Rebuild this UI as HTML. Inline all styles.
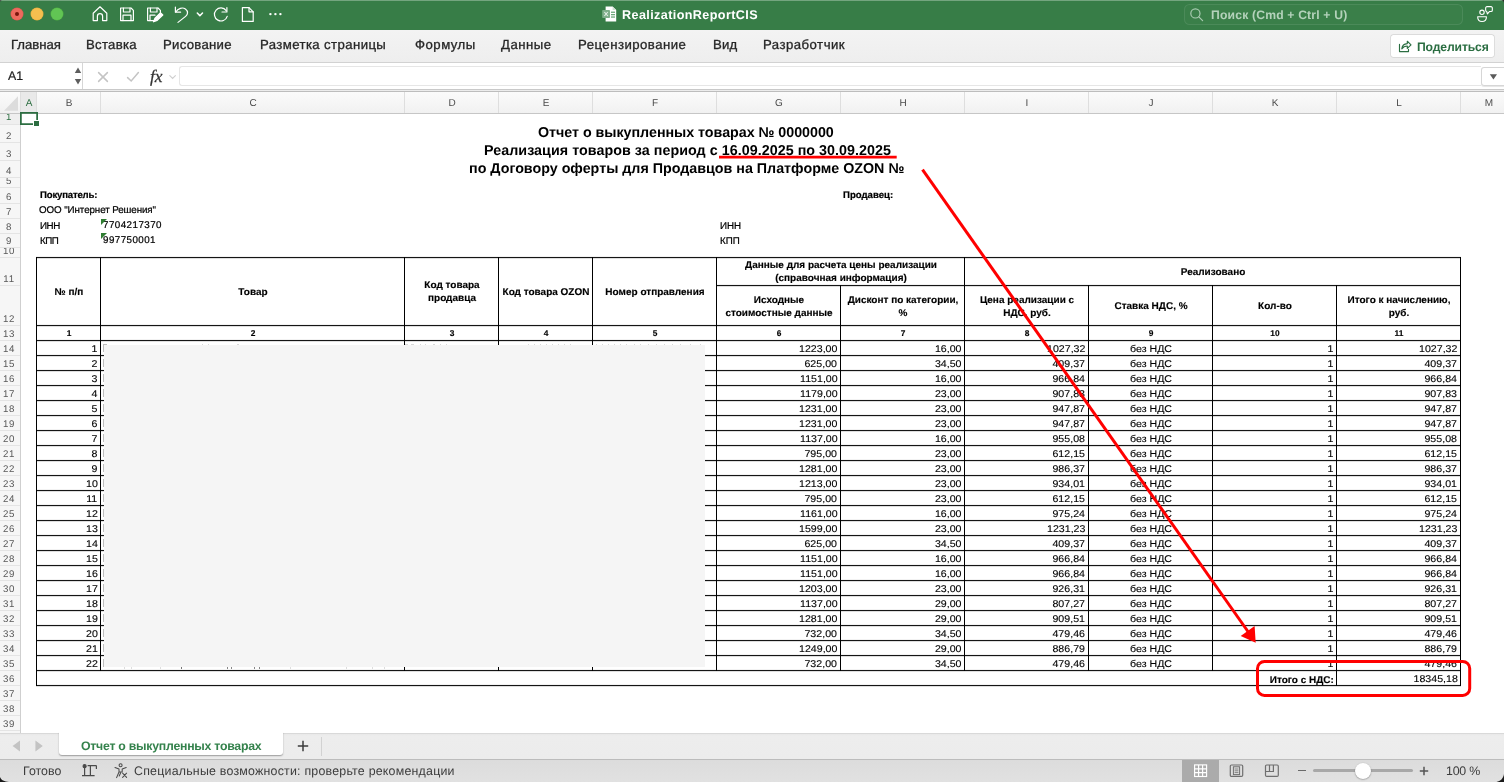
<!DOCTYPE html>
<html><head><meta charset="utf-8"><title>RealizationReportCIS</title>
<style>
html,body{margin:0;padding:0}
body{width:1504px;height:782px;position:relative;overflow:hidden;background:#fff;font-family:"Liberation Sans",sans-serif;}
.t{position:absolute;white-space:nowrap;transform:skewX(.03deg)}
.m{-webkit-text-stroke:0.3px currentColor}
.a{position:absolute;}
.hl{position:absolute;height:1px;background:#151515;box-shadow:0 1px 0 rgba(0,0,0,.13),0 -1px 0 rgba(0,0,0,.05)}
.vl{position:absolute;width:1px;background:#000;}
svg{position:absolute;overflow:visible}
</style></head><body><div id="w" style="position:absolute;left:0;top:0;width:1504px;height:782px;will-change:transform">

<div class="a" style="left:0;top:0;width:1504px;height:30px;background:#377d47"></div>
<div class="a" style="left:0;top:0;width:1504px;height:1px;background:#74a57f"></div>
<div class="a" style="left:11.0px;top:8px;width:12px;height:12px;border-radius:50%;background:#ed6a5e;box-shadow:0 0 0 0.5px #d8574b"></div>
<div class="a" style="left:31.0px;top:8px;width:12px;height:12px;border-radius:50%;background:#f5bf4f;box-shadow:0 0 0 0.5px #dea83b"></div>
<div class="a" style="left:51.0px;top:8px;width:12px;height:12px;border-radius:50%;background:#61c554;box-shadow:0 0 0 0.5px #4fae42"></div>
<div class="a" style="left:15px;top:12px;width:4px;height:4px;border-radius:50%;background:#7a150d"></div>
<svg style="left:0;top:0" width="300" height="30" viewBox="0 0 300 30" fill="none" stroke="#fff" stroke-width="1.2" stroke-linejoin="round" stroke-linecap="round">
<path d="M93.2 13.2 L100 6.8 L106.8 13.2 V20.6 H102.6 V16.2 a2.6 2.6 0 0 0 -5.2 0 V20.6 H93.2 Z"/>
<path d="M120.6 8 H131 L133.4 10.4 V20.6 H120.6 Z"/><path d="M123.4 8 V12 H130 V8"/><path d="M123 20.6 V15.2 H131 V20.6"/>
<path d="M158 8 L160.4 10.4 V12.5 M155 20.6 H147.6 V8 H158"/><path d="M150.4 8 V12 H157 V8"/><path d="M150 20.6 V15.2 H155"/>
<path d="M153.5 21.8 L155 18.2 L160.6 12.8 L162.8 15 L157.2 20.4 Z" fill="#fff"/>
<path d="M175.4 7 V12.2 H180.6"/><path d="M175.8 12 C178 8.2 182.6 7 185.4 9 C188.6 11.4 187.8 14.6 185.6 16.4 L178 22.4"/>
<path d="M197.3 13 L199.9 15.8 L202.5 13" stroke-width="1.5"/>
<path d="M226.2 10.6 A6.5 6.5 0 1 0 227.2 16.3"/><path d="M222 12 H226.9 V7.6"/>
<path d="M242.4 7.6 H249 L253.2 11.8 V21.4 H242.4 Z"/><path d="M249 7.6 V11.8 H253.2"/>
<circle cx="270.4" cy="14.1" r="1.2" fill="#fff" stroke="none"/><circle cx="275.4" cy="14.1" r="1.2" fill="#fff" stroke="none"/><circle cx="280.4" cy="14.1" r="1.2" fill="#fff" stroke="none"/>
</svg>
<svg style="left:602px;top:6px" width="15" height="16" viewBox="0 0 15 16"><path d="M3.6 0.4 H10.6 L14.2 4 V15.4 H3.6 Z" fill="#fff"/><path d="M10.6 0.4 V4 H14.2 Z" fill="#cfe0d3"/>
<rect x="9" y="5.6" width="4" height="1.3" fill="#6fa87c"/><rect x="9" y="8" width="4" height="1.3" fill="#6fa87c"/><rect x="9" y="10.4" width="4" height="1.3" fill="#6fa87c"/>
<rect x="0.2" y="4" width="7.8" height="8" rx="0.8" fill="#7fae8a"/><path d="M2.4 6 L5.8 10 M5.8 6 L2.4 10" stroke="#e6f0e8" stroke-width="1.1"/></svg>
<div class="t" style="left:621.90px;top:7.00px;font-size:12.60px;line-height:16px;font-weight:700;letter-spacing:0.394px;color:#fff;">RealizationReportCIS</div>
<div class="a" style="left:1183.5px;top:3.5px;width:279px;height:21px;border-radius:5.5px;background:rgba(255,255,255,0.015);box-shadow:0 0 0 1px rgba(255,255,255,0.09) inset"></div>
<svg style="left:1189px;top:7px" width="16" height="16" viewBox="0 0 16 16" fill="none" stroke="#a9cbb1" stroke-width="1.2" stroke-linecap="round"><circle cx="6.4" cy="6.4" r="4.6"/><path d="M9.8 9.8 L13.6 13.6"/></svg>
<div class="t" style="left:1210.70px;top:7.00px;font-size:12.20px;line-height:16px;font-weight:700;letter-spacing:0.165px;color:#b4d2bb;">Поиск (Cmd + Ctrl + U)</div>
<svg style="left:1476px;top:5px" width="18" height="18" viewBox="0 0 18 18" fill="none" stroke="#fff" stroke-width="1.1" stroke-linejoin="round"><circle cx="6" cy="7.3" r="2.2"/><path d="M1.65 11.75 H10.45 C10.45 14.8 8.4 16.55 6.05 16.55 C3.7 16.55 1.65 14.8 1.65 11.75 Z"/><path d="M11 1.65 H15 A1.35 1.35 0 0 1 16.35 3 V5.2 A1.35 1.35 0 0 1 15 6.55 H13.4 L11.4 8.8 L10.7 6.5 A1.35 1.35 0 0 1 9.65 5.2 V3 A1.35 1.35 0 0 1 11 1.65 Z"/></svg>
<div class="a" style="left:0;top:30px;width:1504px;height:32px;background:linear-gradient(#f3f3f3,#eeeeee)"></div>
<div class="a" style="left:0;top:62px;width:1504px;height:1px;background:#d2d2d2"></div>
<div class="t" style="left:10.60px;top:37.00px;font-size:13.20px;line-height:16px;letter-spacing:-0.049px;color:#262626;-webkit-text-stroke:0.3px #262626;">Главная</div>
<div class="t" style="left:86.40px;top:37.00px;font-size:13.20px;line-height:16px;letter-spacing:0.263px;color:#262626;-webkit-text-stroke:0.3px #262626;">Вставка</div>
<div class="t" style="left:162.90px;top:37.00px;font-size:13.20px;line-height:16px;letter-spacing:0.258px;color:#262626;-webkit-text-stroke:0.3px #262626;">Рисование</div>
<div class="t" style="left:260.00px;top:37.00px;font-size:13.20px;line-height:16px;letter-spacing:0.385px;color:#262626;-webkit-text-stroke:0.3px #262626;">Разметка страницы</div>
<div class="t" style="left:414.60px;top:37.00px;font-size:13.20px;line-height:16px;letter-spacing:0.480px;color:#262626;-webkit-text-stroke:0.3px #262626;">Формулы</div>
<div class="t" style="left:500.60px;top:37.00px;font-size:13.20px;line-height:16px;letter-spacing:0.468px;color:#262626;-webkit-text-stroke:0.3px #262626;">Данные</div>
<div class="t" style="left:578.40px;top:37.00px;font-size:13.20px;line-height:16px;letter-spacing:0.462px;color:#262626;-webkit-text-stroke:0.3px #262626;">Рецензирование</div>
<div class="t" style="left:713.40px;top:37.00px;font-size:13.20px;line-height:16px;letter-spacing:0.107px;color:#262626;-webkit-text-stroke:0.3px #262626;">Вид</div>
<div class="t" style="left:762.60px;top:37.00px;font-size:13.20px;line-height:16px;letter-spacing:0.466px;color:#262626;-webkit-text-stroke:0.3px #262626;">Разработчик</div>
<div class="a" style="left:1390.5px;top:35px;width:103px;height:22px;border-radius:2.5px;background:#fff;box-shadow:0 0 0 0.7px #d4d4d4"></div>
<svg style="left:1398px;top:39px" width="14" height="14" viewBox="0 0 14 14" fill="none" stroke="#2b6e42" stroke-width="1.15" stroke-linejoin="round" stroke-linecap="round"><path d="M1.5 5.4 V12.6 H10.5 V10.3"/><path d="M3.8 9.8 C4.2 6.6 6.4 4.8 9.3 4.6 V2.2 L13 5.8 L9.3 9.4 V7 C7 7 5.2 7.8 3.8 9.8 Z"/></svg>
<div class="t" style="left:1416.70px;top:38.50px;font-size:12.20px;line-height:16px;font-weight:700;letter-spacing:-0.152px;color:#2b6e42;">Поделиться</div>
<div class="a" style="left:0;top:63px;width:1504px;height:26px;background:#fff"></div>
<div class="a" style="left:0;top:89px;width:1504px;height:1px;background:#c9c9c9"></div>
<div class="a" style="left:0;top:90px;width:1504px;height:1px;background:#ececec"></div>
<div class="a" style="left:0;top:91px;width:1504px;height:1px;background:#bdbdbd"></div>
<div class="a" style="left:82px;top:63px;width:1px;height:26px;background:#d6d6d6"></div>
<div class="a" style="left:83px;top:63px;width:96px;height:26px;background:#fff"></div>
<div class="a" style="left:179px;top:66px;width:1302px;height:20px;background:#fff;border:0.6px solid #e6e6e6;border-right:none;border-radius:3px 0 0 3px;box-sizing:border-box"></div>
<div class="a" style="left:1481px;top:67px;width:26px;height:19px;background:#fff;border:1px solid #d6d6d6;border-radius:3px 0 0 3px;box-shadow:0 0.5px 0.8px rgba(0,0,0,.1);box-sizing:border-box"></div>
<svg style="left:1489px;top:73px" width="9" height="8" viewBox="0 0 9 8"><path d="M0.8 1.2 H8 L4.4 6.6 Z" fill="#5a5a5a"/></svg>
<div class="t" style="left:8.20px;top:67.80px;font-size:12.40px;line-height:16px;color:#1c1c1c;-webkit-text-stroke:0.2px #1c1c1c;">A1</div>
<svg style="left:74px;top:66px" width="8" height="20" viewBox="0 0 8 20"><path d="M0.8 7 H7.2 L4 1.6 Z M0.8 13 H7.2 L4 18.5 Z" fill="#5e5e5e"/></svg>
<svg style="left:96px;top:70px" width="80" height="14" viewBox="0 0 80 14" fill="none" stroke="#c4c4c4" stroke-width="1.5" stroke-linecap="round"><path d="M2.6 2.6 L11.4 11.4 M11.4 2.6 L2.6 11.4"/><path d="M31.6 7.6 L35.2 11 L42.4 2.6"/><path d="M73.8 5.6 L76.6 8.4 L79.4 5.6" stroke-width="1.1" stroke="#cfcfcf"/></svg>
<div class="t" style="left:150px;top:66px;font-family:'Liberation Serif',serif;font-style:italic;font-size:17.5px;line-height:20px;color:#333;letter-spacing:-0.2px;-webkit-text-stroke:0.25px #333">fx</div>
<div class="a" style="left:0;top:92px;width:1504px;height:21px;background:linear-gradient(#fbfbfb,#f1f1f1)"></div>
<div class="a" style="left:0;top:113px;width:1504px;height:1px;background:#c6c6c6"></div>
<div class="a" style="left:21px;top:92px;width:15px;height:21px;background:#e9e9e9"></div>
<div class="a" style="left:20px;top:92px;width:1px;height:21px;background:#dedede"></div>
<div class="t" style="left:28.80px;transform:translateX(-50%) skewX(.03deg);top:96.30px;font-size:10.00px;line-height:14px;color:#2c6e41;">A</div>
<div class="a" style="left:36px;top:92px;width:1px;height:21px;background:#dedede"></div>
<div class="t" style="left:68.80px;transform:translateX(-50%) skewX(.03deg);top:96.30px;font-size:10.00px;line-height:14px;color:#4a4a4a;">B</div>
<div class="a" style="left:100px;top:92px;width:1px;height:21px;background:#dedede"></div>
<div class="t" style="left:252.80px;transform:translateX(-50%) skewX(.03deg);top:96.30px;font-size:10.00px;line-height:14px;color:#4a4a4a;">C</div>
<div class="a" style="left:404px;top:92px;width:1px;height:21px;background:#dedede"></div>
<div class="t" style="left:451.80px;transform:translateX(-50%) skewX(.03deg);top:96.30px;font-size:10.00px;line-height:14px;color:#4a4a4a;">D</div>
<div class="a" style="left:498px;top:92px;width:1px;height:21px;background:#dedede"></div>
<div class="t" style="left:545.80px;transform:translateX(-50%) skewX(.03deg);top:96.30px;font-size:10.00px;line-height:14px;color:#4a4a4a;">E</div>
<div class="a" style="left:592px;top:92px;width:1px;height:21px;background:#dedede"></div>
<div class="t" style="left:654.80px;transform:translateX(-50%) skewX(.03deg);top:96.30px;font-size:10.00px;line-height:14px;color:#4a4a4a;">F</div>
<div class="a" style="left:716px;top:92px;width:1px;height:21px;background:#dedede"></div>
<div class="t" style="left:778.80px;transform:translateX(-50%) skewX(.03deg);top:96.30px;font-size:10.00px;line-height:14px;color:#4a4a4a;">G</div>
<div class="a" style="left:840px;top:92px;width:1px;height:21px;background:#dedede"></div>
<div class="t" style="left:902.80px;transform:translateX(-50%) skewX(.03deg);top:96.30px;font-size:10.00px;line-height:14px;color:#4a4a4a;">H</div>
<div class="a" style="left:964px;top:92px;width:1px;height:21px;background:#dedede"></div>
<div class="t" style="left:1026.80px;transform:translateX(-50%) skewX(.03deg);top:96.30px;font-size:10.00px;line-height:14px;color:#4a4a4a;">I</div>
<div class="a" style="left:1088px;top:92px;width:1px;height:21px;background:#dedede"></div>
<div class="t" style="left:1150.80px;transform:translateX(-50%) skewX(.03deg);top:96.30px;font-size:10.00px;line-height:14px;color:#4a4a4a;">J</div>
<div class="a" style="left:1212px;top:92px;width:1px;height:21px;background:#dedede"></div>
<div class="t" style="left:1274.80px;transform:translateX(-50%) skewX(.03deg);top:96.30px;font-size:10.00px;line-height:14px;color:#4a4a4a;">K</div>
<div class="a" style="left:1336px;top:92px;width:1px;height:21px;background:#dedede"></div>
<div class="t" style="left:1398.80px;transform:translateX(-50%) skewX(.03deg);top:96.30px;font-size:10.00px;line-height:14px;color:#4a4a4a;">L</div>
<div class="a" style="left:1460px;top:92px;width:1px;height:21px;background:#dedede"></div>
<div class="t" style="left:1488.80px;transform:translateX(-50%) skewX(.03deg);top:96.30px;font-size:10.00px;line-height:14px;color:#4a4a4a;">M</div>
<svg style="left:4px;top:96px" width="14" height="15" viewBox="0 0 14 15"><path d="M14 0.2 V14.8 H0 Z" fill="#dcdcdc"/></svg>
<div class="a" style="left:0;top:114px;width:20px;height:619px;background:#f6f6f6"></div>
<div class="a" style="left:20px;top:114px;width:1px;height:619px;background:#cfcfcf"></div>
<div class="a" style="left:0;top:114px;width:20px;height:10px;background:#efefef"></div>
<div class="a" style="left:0;top:124px;width:20px;height:1px;background:#e4e4e4"></div>
<div class="a" style="left:0;top:114px;width:20px;height:10px;overflow:hidden"><div class="t" style="left:8.6px;transform:translateX(-50%) skewX(.03deg);bottom:1.0px;font-size:9.7px;line-height:12px;letter-spacing:0.7px;margin-left:0.35px;color:#2c6e41">1</div></div>
<div class="a" style="left:0;top:142px;width:20px;height:1px;background:#e4e4e4"></div>
<div class="a" style="left:0;top:125px;width:20px;height:17px;overflow:hidden"><div class="t" style="left:8.6px;transform:translateX(-50%) skewX(.03deg);bottom:-0.4px;font-size:9.7px;line-height:12px;letter-spacing:0.7px;margin-left:0.35px;color:#585858">2</div></div>
<div class="a" style="left:0;top:160px;width:20px;height:1px;background:#e4e4e4"></div>
<div class="a" style="left:0;top:143px;width:20px;height:17px;overflow:hidden"><div class="t" style="left:8.6px;transform:translateX(-50%) skewX(.03deg);bottom:-0.4px;font-size:9.7px;line-height:12px;letter-spacing:0.7px;margin-left:0.35px;color:#585858">3</div></div>
<div class="a" style="left:0;top:177px;width:20px;height:1px;background:#e4e4e4"></div>
<div class="a" style="left:0;top:161px;width:20px;height:16px;overflow:hidden"><div class="t" style="left:8.6px;transform:translateX(-50%) skewX(.03deg);bottom:-0.4px;font-size:9.7px;line-height:12px;letter-spacing:0.7px;margin-left:0.35px;color:#585858">4</div></div>
<div class="a" style="left:0;top:187px;width:20px;height:1px;background:#e4e4e4"></div>
<div class="a" style="left:0;top:178px;width:20px;height:9px;overflow:hidden"><div class="t" style="left:8.6px;transform:translateX(-50%) skewX(.03deg);bottom:-0.4px;font-size:9.7px;line-height:12px;letter-spacing:0.7px;margin-left:0.35px;color:#585858">5</div></div>
<div class="a" style="left:0;top:203px;width:20px;height:1px;background:#e4e4e4"></div>
<div class="a" style="left:0;top:188px;width:20px;height:15px;overflow:hidden"><div class="t" style="left:8.6px;transform:translateX(-50%) skewX(.03deg);bottom:-0.4px;font-size:9.7px;line-height:12px;letter-spacing:0.7px;margin-left:0.35px;color:#585858">6</div></div>
<div class="a" style="left:0;top:218px;width:20px;height:1px;background:#e4e4e4"></div>
<div class="a" style="left:0;top:204px;width:20px;height:14px;overflow:hidden"><div class="t" style="left:8.6px;transform:translateX(-50%) skewX(.03deg);bottom:-0.4px;font-size:9.7px;line-height:12px;letter-spacing:0.7px;margin-left:0.35px;color:#585858">7</div></div>
<div class="a" style="left:0;top:233px;width:20px;height:1px;background:#e4e4e4"></div>
<div class="a" style="left:0;top:219px;width:20px;height:14px;overflow:hidden"><div class="t" style="left:8.6px;transform:translateX(-50%) skewX(.03deg);bottom:-0.4px;font-size:9.7px;line-height:12px;letter-spacing:0.7px;margin-left:0.35px;color:#585858">8</div></div>
<div class="a" style="left:0;top:247px;width:20px;height:1px;background:#e4e4e4"></div>
<div class="a" style="left:0;top:234px;width:20px;height:13px;overflow:hidden"><div class="t" style="left:8.6px;transform:translateX(-50%) skewX(.03deg);bottom:-0.4px;font-size:9.7px;line-height:12px;letter-spacing:0.7px;margin-left:0.35px;color:#585858">9</div></div>
<div class="a" style="left:0;top:257px;width:20px;height:1px;background:#e4e4e4"></div>
<div class="a" style="left:0;top:248px;width:20px;height:9px;overflow:hidden"><div class="t" style="left:8.6px;transform:translateX(-50%) skewX(.03deg);bottom:-0.4px;font-size:9.7px;line-height:12px;letter-spacing:0.7px;margin-left:0.35px;color:#585858">10</div></div>
<div class="a" style="left:0;top:285px;width:20px;height:1px;background:#e4e4e4"></div>
<div class="a" style="left:0;top:258px;width:20px;height:27px;overflow:hidden"><div class="t" style="left:8.6px;transform:translateX(-50%) skewX(.03deg);bottom:-0.4px;font-size:9.7px;line-height:12px;letter-spacing:0.7px;margin-left:0.35px;color:#585858">11</div></div>
<div class="a" style="left:0;top:325px;width:20px;height:1px;background:#e4e4e4"></div>
<div class="a" style="left:0;top:286px;width:20px;height:39px;overflow:hidden"><div class="t" style="left:8.6px;transform:translateX(-50%) skewX(.03deg);bottom:-0.4px;font-size:9.7px;line-height:12px;letter-spacing:0.7px;margin-left:0.35px;color:#585858">12</div></div>
<div class="a" style="left:0;top:340px;width:20px;height:1px;background:#e4e4e4"></div>
<div class="a" style="left:0;top:326px;width:20px;height:14px;overflow:hidden"><div class="t" style="left:8.6px;transform:translateX(-50%) skewX(.03deg);bottom:-0.4px;font-size:9.7px;line-height:12px;letter-spacing:0.7px;margin-left:0.35px;color:#585858">13</div></div>
<div class="a" style="left:0;top:355px;width:20px;height:1px;background:#e4e4e4"></div>
<div class="a" style="left:0;top:341px;width:20px;height:14px;overflow:hidden"><div class="t" style="left:8.6px;transform:translateX(-50%) skewX(.03deg);bottom:-0.4px;font-size:9.7px;line-height:12px;letter-spacing:0.7px;margin-left:0.35px;color:#585858">14</div></div>
<div class="a" style="left:0;top:370px;width:20px;height:1px;background:#e4e4e4"></div>
<div class="a" style="left:0;top:356px;width:20px;height:14px;overflow:hidden"><div class="t" style="left:8.6px;transform:translateX(-50%) skewX(.03deg);bottom:-0.4px;font-size:9.7px;line-height:12px;letter-spacing:0.7px;margin-left:0.35px;color:#585858">15</div></div>
<div class="a" style="left:0;top:385px;width:20px;height:1px;background:#e4e4e4"></div>
<div class="a" style="left:0;top:371px;width:20px;height:14px;overflow:hidden"><div class="t" style="left:8.6px;transform:translateX(-50%) skewX(.03deg);bottom:-0.4px;font-size:9.7px;line-height:12px;letter-spacing:0.7px;margin-left:0.35px;color:#585858">16</div></div>
<div class="a" style="left:0;top:400px;width:20px;height:1px;background:#e4e4e4"></div>
<div class="a" style="left:0;top:386px;width:20px;height:14px;overflow:hidden"><div class="t" style="left:8.6px;transform:translateX(-50%) skewX(.03deg);bottom:-0.4px;font-size:9.7px;line-height:12px;letter-spacing:0.7px;margin-left:0.35px;color:#585858">17</div></div>
<div class="a" style="left:0;top:415px;width:20px;height:1px;background:#e4e4e4"></div>
<div class="a" style="left:0;top:401px;width:20px;height:14px;overflow:hidden"><div class="t" style="left:8.6px;transform:translateX(-50%) skewX(.03deg);bottom:-0.4px;font-size:9.7px;line-height:12px;letter-spacing:0.7px;margin-left:0.35px;color:#585858">18</div></div>
<div class="a" style="left:0;top:430px;width:20px;height:1px;background:#e4e4e4"></div>
<div class="a" style="left:0;top:416px;width:20px;height:14px;overflow:hidden"><div class="t" style="left:8.6px;transform:translateX(-50%) skewX(.03deg);bottom:-0.4px;font-size:9.7px;line-height:12px;letter-spacing:0.7px;margin-left:0.35px;color:#585858">19</div></div>
<div class="a" style="left:0;top:445px;width:20px;height:1px;background:#e4e4e4"></div>
<div class="a" style="left:0;top:431px;width:20px;height:14px;overflow:hidden"><div class="t" style="left:8.6px;transform:translateX(-50%) skewX(.03deg);bottom:-0.4px;font-size:9.7px;line-height:12px;letter-spacing:0.7px;margin-left:0.35px;color:#585858">20</div></div>
<div class="a" style="left:0;top:460px;width:20px;height:1px;background:#e4e4e4"></div>
<div class="a" style="left:0;top:446px;width:20px;height:14px;overflow:hidden"><div class="t" style="left:8.6px;transform:translateX(-50%) skewX(.03deg);bottom:-0.4px;font-size:9.7px;line-height:12px;letter-spacing:0.7px;margin-left:0.35px;color:#585858">21</div></div>
<div class="a" style="left:0;top:475px;width:20px;height:1px;background:#e4e4e4"></div>
<div class="a" style="left:0;top:461px;width:20px;height:14px;overflow:hidden"><div class="t" style="left:8.6px;transform:translateX(-50%) skewX(.03deg);bottom:-0.4px;font-size:9.7px;line-height:12px;letter-spacing:0.7px;margin-left:0.35px;color:#585858">22</div></div>
<div class="a" style="left:0;top:490px;width:20px;height:1px;background:#e4e4e4"></div>
<div class="a" style="left:0;top:476px;width:20px;height:14px;overflow:hidden"><div class="t" style="left:8.6px;transform:translateX(-50%) skewX(.03deg);bottom:-0.4px;font-size:9.7px;line-height:12px;letter-spacing:0.7px;margin-left:0.35px;color:#585858">23</div></div>
<div class="a" style="left:0;top:505px;width:20px;height:1px;background:#e4e4e4"></div>
<div class="a" style="left:0;top:491px;width:20px;height:14px;overflow:hidden"><div class="t" style="left:8.6px;transform:translateX(-50%) skewX(.03deg);bottom:-0.4px;font-size:9.7px;line-height:12px;letter-spacing:0.7px;margin-left:0.35px;color:#585858">24</div></div>
<div class="a" style="left:0;top:520px;width:20px;height:1px;background:#e4e4e4"></div>
<div class="a" style="left:0;top:506px;width:20px;height:14px;overflow:hidden"><div class="t" style="left:8.6px;transform:translateX(-50%) skewX(.03deg);bottom:-0.4px;font-size:9.7px;line-height:12px;letter-spacing:0.7px;margin-left:0.35px;color:#585858">25</div></div>
<div class="a" style="left:0;top:535px;width:20px;height:1px;background:#e4e4e4"></div>
<div class="a" style="left:0;top:521px;width:20px;height:14px;overflow:hidden"><div class="t" style="left:8.6px;transform:translateX(-50%) skewX(.03deg);bottom:-0.4px;font-size:9.7px;line-height:12px;letter-spacing:0.7px;margin-left:0.35px;color:#585858">26</div></div>
<div class="a" style="left:0;top:550px;width:20px;height:1px;background:#e4e4e4"></div>
<div class="a" style="left:0;top:536px;width:20px;height:14px;overflow:hidden"><div class="t" style="left:8.6px;transform:translateX(-50%) skewX(.03deg);bottom:-0.4px;font-size:9.7px;line-height:12px;letter-spacing:0.7px;margin-left:0.35px;color:#585858">27</div></div>
<div class="a" style="left:0;top:565px;width:20px;height:1px;background:#e4e4e4"></div>
<div class="a" style="left:0;top:551px;width:20px;height:14px;overflow:hidden"><div class="t" style="left:8.6px;transform:translateX(-50%) skewX(.03deg);bottom:-0.4px;font-size:9.7px;line-height:12px;letter-spacing:0.7px;margin-left:0.35px;color:#585858">28</div></div>
<div class="a" style="left:0;top:580px;width:20px;height:1px;background:#e4e4e4"></div>
<div class="a" style="left:0;top:566px;width:20px;height:14px;overflow:hidden"><div class="t" style="left:8.6px;transform:translateX(-50%) skewX(.03deg);bottom:-0.4px;font-size:9.7px;line-height:12px;letter-spacing:0.7px;margin-left:0.35px;color:#585858">29</div></div>
<div class="a" style="left:0;top:595px;width:20px;height:1px;background:#e4e4e4"></div>
<div class="a" style="left:0;top:581px;width:20px;height:14px;overflow:hidden"><div class="t" style="left:8.6px;transform:translateX(-50%) skewX(.03deg);bottom:-0.4px;font-size:9.7px;line-height:12px;letter-spacing:0.7px;margin-left:0.35px;color:#585858">30</div></div>
<div class="a" style="left:0;top:610px;width:20px;height:1px;background:#e4e4e4"></div>
<div class="a" style="left:0;top:596px;width:20px;height:14px;overflow:hidden"><div class="t" style="left:8.6px;transform:translateX(-50%) skewX(.03deg);bottom:-0.4px;font-size:9.7px;line-height:12px;letter-spacing:0.7px;margin-left:0.35px;color:#585858">31</div></div>
<div class="a" style="left:0;top:625px;width:20px;height:1px;background:#e4e4e4"></div>
<div class="a" style="left:0;top:611px;width:20px;height:14px;overflow:hidden"><div class="t" style="left:8.6px;transform:translateX(-50%) skewX(.03deg);bottom:-0.4px;font-size:9.7px;line-height:12px;letter-spacing:0.7px;margin-left:0.35px;color:#585858">32</div></div>
<div class="a" style="left:0;top:640px;width:20px;height:1px;background:#e4e4e4"></div>
<div class="a" style="left:0;top:626px;width:20px;height:14px;overflow:hidden"><div class="t" style="left:8.6px;transform:translateX(-50%) skewX(.03deg);bottom:-0.4px;font-size:9.7px;line-height:12px;letter-spacing:0.7px;margin-left:0.35px;color:#585858">33</div></div>
<div class="a" style="left:0;top:655px;width:20px;height:1px;background:#e4e4e4"></div>
<div class="a" style="left:0;top:641px;width:20px;height:14px;overflow:hidden"><div class="t" style="left:8.6px;transform:translateX(-50%) skewX(.03deg);bottom:-0.4px;font-size:9.7px;line-height:12px;letter-spacing:0.7px;margin-left:0.35px;color:#585858">34</div></div>
<div class="a" style="left:0;top:670px;width:20px;height:1px;background:#e4e4e4"></div>
<div class="a" style="left:0;top:656px;width:20px;height:14px;overflow:hidden"><div class="t" style="left:8.6px;transform:translateX(-50%) skewX(.03deg);bottom:-0.4px;font-size:9.7px;line-height:12px;letter-spacing:0.7px;margin-left:0.35px;color:#585858">35</div></div>
<div class="a" style="left:0;top:685px;width:20px;height:1px;background:#e4e4e4"></div>
<div class="a" style="left:0;top:671px;width:20px;height:14px;overflow:hidden"><div class="t" style="left:8.6px;transform:translateX(-50%) skewX(.03deg);bottom:-0.4px;font-size:9.7px;line-height:12px;letter-spacing:0.7px;margin-left:0.35px;color:#585858">36</div></div>
<div class="a" style="left:0;top:700px;width:20px;height:1px;background:#e4e4e4"></div>
<div class="a" style="left:0;top:686px;width:20px;height:14px;overflow:hidden"><div class="t" style="left:8.6px;transform:translateX(-50%) skewX(.03deg);bottom:-0.4px;font-size:9.7px;line-height:12px;letter-spacing:0.7px;margin-left:0.35px;color:#585858">37</div></div>
<div class="a" style="left:0;top:715px;width:20px;height:1px;background:#e4e4e4"></div>
<div class="a" style="left:0;top:701px;width:20px;height:14px;overflow:hidden"><div class="t" style="left:8.6px;transform:translateX(-50%) skewX(.03deg);bottom:-0.4px;font-size:9.7px;line-height:12px;letter-spacing:0.7px;margin-left:0.35px;color:#585858">38</div></div>
<div class="a" style="left:0;top:730px;width:20px;height:1px;background:#e4e4e4"></div>
<div class="a" style="left:0;top:716px;width:20px;height:14px;overflow:hidden"><div class="t" style="left:8.6px;transform:translateX(-50%) skewX(.03deg);bottom:-0.4px;font-size:9.7px;line-height:12px;letter-spacing:0.7px;margin-left:0.35px;color:#585858">39</div></div>
<div class="a" style="left:19.6px;top:112.2px;width:18.4px;height:12.8px;box-shadow:inset 0 0 0 1.75px #2c6e41"></div>
<div class="a" style="left:33.4px;top:120.4px;width:5px;height:5px;background:#2c6e41;border:1px solid #fff;border-right:none;border-bottom:none;box-sizing:content-box"></div>
<div class="t" style="left:538.20px;top:124.10px;font-size:14.30px;line-height:16px;font-weight:700;letter-spacing:-0.038px;color:#000;">Отчет о выкупленных товарах № 0000000</div>
<div class="t" style="left:483.60px;top:142.10px;font-size:14.30px;line-height:16px;font-weight:700;letter-spacing:0.038px;color:#000;">Реализация товаров за период с 16.09.2025 по 30.09.2025</div>
<div class="t" style="left:468.80px;top:160.10px;font-size:14.30px;line-height:16px;font-weight:700;letter-spacing:-0.009px;color:#000;">по Договору оферты для Продавцов на Платформе OZON №</div>
<div class="t" style="left:39.60px;top:189.00px;font-size:9.60px;line-height:12px;font-weight:700;letter-spacing:-0.189px;color:#000;-webkit-text-stroke:0.22px #000;">Покупатель:</div>
<div class="t" style="left:39.40px;top:203.50px;font-size:9.80px;line-height:12px;letter-spacing:-0.095px;color:#000;-webkit-text-stroke:0.22px #000;">ООО &quot;Интернет Решения&quot;</div>
<div class="t" style="left:39.60px;top:219.50px;font-size:9.80px;line-height:12px;letter-spacing:-0.466px;color:#000;-webkit-text-stroke:0.22px #000;">ИНН</div>
<div class="t" style="left:39.60px;top:234.50px;font-size:9.80px;line-height:12px;letter-spacing:-0.465px;color:#000;-webkit-text-stroke:0.22px #000;">КПП</div>
<div class="t" style="left:103.00px;top:218.50px;font-size:9.80px;line-height:12px;letter-spacing:0.450px;color:#000;-webkit-text-stroke:0.22px #000;">7704217370</div>
<div class="t" style="left:103.00px;top:233.50px;font-size:9.80px;line-height:12px;letter-spacing:0.439px;color:#000;-webkit-text-stroke:0.22px #000;">997750001</div>
<div class="t" style="left:843.00px;top:189.00px;font-size:9.60px;line-height:12px;font-weight:700;color:#000;-webkit-text-stroke:0.22px #000;">Продавец:</div>
<div class="t" style="left:719.50px;top:219.50px;font-size:9.80px;line-height:12px;color:#000;-webkit-text-stroke:0.22px #000;">ИНН</div>
<div class="t" style="left:719.50px;top:234.50px;font-size:9.80px;line-height:12px;color:#000;-webkit-text-stroke:0.22px #000;">КПП</div>
<svg style="left:101px;top:219px" width="6" height="6" viewBox="0 0 6 6"><path d="M0 0 H6 L0 6 Z" fill="#2f7d32"/></svg>
<svg style="left:101px;top:233px" width="6" height="6" viewBox="0 0 6 6"><path d="M0 0 H6 L0 6 Z" fill="#2f7d32"/></svg>
<div class="hl" style="left:36px;top:257px;width:1425px"></div>
<div class="hl" style="left:716px;top:285px;width:745px"></div>
<div class="hl" style="left:36px;top:325px;width:1425px"></div>
<div class="hl" style="left:36px;top:340px;width:1425px"></div>
<div class="hl" style="left:36px;top:355px;width:1425px"></div>
<div class="hl" style="left:36px;top:370px;width:1425px"></div>
<div class="hl" style="left:36px;top:385px;width:1425px"></div>
<div class="hl" style="left:36px;top:400px;width:1425px"></div>
<div class="hl" style="left:36px;top:415px;width:1425px"></div>
<div class="hl" style="left:36px;top:430px;width:1425px"></div>
<div class="hl" style="left:36px;top:445px;width:1425px"></div>
<div class="hl" style="left:36px;top:460px;width:1425px"></div>
<div class="hl" style="left:36px;top:475px;width:1425px"></div>
<div class="hl" style="left:36px;top:490px;width:1425px"></div>
<div class="hl" style="left:36px;top:505px;width:1425px"></div>
<div class="hl" style="left:36px;top:520px;width:1425px"></div>
<div class="hl" style="left:36px;top:535px;width:1425px"></div>
<div class="hl" style="left:36px;top:550px;width:1425px"></div>
<div class="hl" style="left:36px;top:565px;width:1425px"></div>
<div class="hl" style="left:36px;top:580px;width:1425px"></div>
<div class="hl" style="left:36px;top:595px;width:1425px"></div>
<div class="hl" style="left:36px;top:610px;width:1425px"></div>
<div class="hl" style="left:36px;top:625px;width:1425px"></div>
<div class="hl" style="left:36px;top:640px;width:1425px"></div>
<div class="hl" style="left:36px;top:655px;width:1425px"></div>
<div class="hl" style="left:36px;top:670px;width:1425px"></div>
<div class="hl" style="left:36px;top:685px;width:1425px"></div>
<div class="vl" style="left:36px;top:257px;height:429px"></div>
<div class="vl" style="left:100px;top:257px;height:414px"></div>
<div class="vl" style="left:404px;top:257px;height:414px"></div>
<div class="vl" style="left:498px;top:257px;height:414px"></div>
<div class="vl" style="left:592px;top:257px;height:414px"></div>
<div class="vl" style="left:716px;top:257px;height:414px"></div>
<div class="vl" style="left:840px;top:285px;height:386px"></div>
<div class="vl" style="left:964px;top:257px;height:414px"></div>
<div class="vl" style="left:1088px;top:285px;height:386px"></div>
<div class="vl" style="left:1212px;top:285px;height:386px"></div>
<div class="vl" style="left:1336px;top:285px;height:386px"></div>
<div class="vl" style="left:1460px;top:257px;height:429px"></div>
<div class="vl" style="left:1336px;top:670px;height:16px"></div>
<div class="t" style="left:68.50px;top:284.70px;transform:translateX(-50%) scaleX(1.020) skewX(.03deg);font-size:9.80px;line-height:13.00px;font-weight:700;letter-spacing:0.00px;-webkit-text-stroke:0.15px #000">№ п/п</div>
<div class="t" style="left:252.50px;top:284.70px;transform:translateX(-50%) scaleX(1.020) skewX(.03deg);font-size:9.80px;line-height:13.00px;font-weight:700;letter-spacing:0.00px;-webkit-text-stroke:0.15px #000">Товар</div>
<div class="t" style="left:451.50px;top:278.20px;transform:translateX(-50%) scaleX(1.020) skewX(.03deg);font-size:9.80px;line-height:13.00px;font-weight:700;letter-spacing:0.00px;-webkit-text-stroke:0.15px #000">Код товара</div>
<div class="t" style="left:451.50px;top:291.20px;transform:translateX(-50%) scaleX(1.020) skewX(.03deg);font-size:9.80px;line-height:13.00px;font-weight:700;letter-spacing:0.00px;-webkit-text-stroke:0.15px #000">продавца</div>
<div class="t" style="left:545.50px;top:284.70px;transform:translateX(-50%) scaleX(1.020) skewX(.03deg);font-size:9.80px;line-height:13.00px;font-weight:700;letter-spacing:0.00px;-webkit-text-stroke:0.15px #000">Код товара OZON</div>
<div class="t" style="left:654.50px;top:284.70px;transform:translateX(-50%) scaleX(1.020) skewX(.03deg);font-size:9.80px;line-height:13.00px;font-weight:700;letter-spacing:0.00px;-webkit-text-stroke:0.15px #000">Номер отправления</div>
<div class="t" style="left:840.50px;top:258.20px;transform:translateX(-50%) scaleX(1.020) skewX(.03deg);font-size:9.80px;line-height:13.00px;font-weight:700;letter-spacing:0.00px;-webkit-text-stroke:0.15px #000">Данные для расчета цены реализации</div>
<div class="t" style="left:840.50px;top:271.20px;transform:translateX(-50%) scaleX(1.020) skewX(.03deg);font-size:9.80px;line-height:13.00px;font-weight:700;letter-spacing:0.00px;-webkit-text-stroke:0.15px #000">(справочная информация)</div>
<div class="t" style="left:1212.50px;top:264.70px;transform:translateX(-50%) scaleX(1.020) skewX(.03deg);font-size:9.80px;line-height:13.00px;font-weight:700;letter-spacing:0.00px;-webkit-text-stroke:0.15px #000">Реализовано</div>
<div class="t" style="left:778.50px;top:293.30px;transform:translateX(-50%) scaleX(1.020) skewX(.03deg);font-size:9.80px;line-height:13.00px;font-weight:700;letter-spacing:0.00px;-webkit-text-stroke:0.15px #000">Исходные</div>
<div class="t" style="left:778.50px;top:306.30px;transform:translateX(-50%) scaleX(1.020) skewX(.03deg);font-size:9.80px;line-height:13.00px;font-weight:700;letter-spacing:0.00px;-webkit-text-stroke:0.15px #000">стоимостные данные</div>
<div class="t" style="left:902.50px;top:293.30px;transform:translateX(-50%) scaleX(1.020) skewX(.03deg);font-size:9.80px;line-height:13.00px;font-weight:700;letter-spacing:0.00px;-webkit-text-stroke:0.15px #000">Дисконт по категории,</div>
<div class="t" style="left:902.50px;top:306.30px;transform:translateX(-50%) scaleX(1.020) skewX(.03deg);font-size:9.80px;line-height:13.00px;font-weight:700;letter-spacing:0.00px;-webkit-text-stroke:0.15px #000">%</div>
<div class="t" style="left:1026.50px;top:293.30px;transform:translateX(-50%) scaleX(1.020) skewX(.03deg);font-size:9.80px;line-height:13.00px;font-weight:700;letter-spacing:0.00px;-webkit-text-stroke:0.15px #000">Цена реализации с</div>
<div class="t" style="left:1026.50px;top:306.30px;transform:translateX(-50%) scaleX(1.020) skewX(.03deg);font-size:9.80px;line-height:13.00px;font-weight:700;letter-spacing:0.00px;-webkit-text-stroke:0.15px #000">НДС, руб.</div>
<div class="t" style="left:1150.50px;top:299.10px;transform:translateX(-50%) scaleX(1.020) skewX(.03deg);font-size:9.80px;line-height:13.00px;font-weight:700;letter-spacing:0.00px;-webkit-text-stroke:0.15px #000">Ставка НДС, %</div>
<div class="t" style="left:1274.50px;top:299.10px;transform:translateX(-50%) scaleX(1.020) skewX(.03deg);font-size:9.80px;line-height:13.00px;font-weight:700;letter-spacing:0.00px;-webkit-text-stroke:0.15px #000">Кол-во</div>
<div class="t" style="left:1398.50px;top:293.30px;transform:translateX(-50%) scaleX(1.020) skewX(.03deg);font-size:9.80px;line-height:13.00px;font-weight:700;letter-spacing:0.00px;-webkit-text-stroke:0.15px #000">Итого к начислению,</div>
<div class="t" style="left:1398.50px;top:306.30px;transform:translateX(-50%) scaleX(1.020) skewX(.03deg);font-size:9.80px;line-height:13.00px;font-weight:700;letter-spacing:0.00px;-webkit-text-stroke:0.15px #000">руб.</div>
<div class="t" style="left:68.50px;top:328.20px;transform:translateX(-50%) scaleX(1.000) skewX(.03deg);font-size:8.40px;line-height:10.00px;font-weight:700;letter-spacing:0.00px;-webkit-text-stroke:0.15px #000">1</div>
<div class="t" style="left:252.50px;top:328.20px;transform:translateX(-50%) scaleX(1.000) skewX(.03deg);font-size:8.40px;line-height:10.00px;font-weight:700;letter-spacing:0.00px;-webkit-text-stroke:0.15px #000">2</div>
<div class="t" style="left:451.50px;top:328.20px;transform:translateX(-50%) scaleX(1.000) skewX(.03deg);font-size:8.40px;line-height:10.00px;font-weight:700;letter-spacing:0.00px;-webkit-text-stroke:0.15px #000">3</div>
<div class="t" style="left:545.50px;top:328.20px;transform:translateX(-50%) scaleX(1.000) skewX(.03deg);font-size:8.40px;line-height:10.00px;font-weight:700;letter-spacing:0.00px;-webkit-text-stroke:0.15px #000">4</div>
<div class="t" style="left:654.50px;top:328.20px;transform:translateX(-50%) scaleX(1.000) skewX(.03deg);font-size:8.40px;line-height:10.00px;font-weight:700;letter-spacing:0.00px;-webkit-text-stroke:0.15px #000">5</div>
<div class="t" style="left:778.50px;top:328.20px;transform:translateX(-50%) scaleX(1.000) skewX(.03deg);font-size:8.40px;line-height:10.00px;font-weight:700;letter-spacing:0.00px;-webkit-text-stroke:0.15px #000">6</div>
<div class="t" style="left:902.50px;top:328.20px;transform:translateX(-50%) scaleX(1.000) skewX(.03deg);font-size:8.40px;line-height:10.00px;font-weight:700;letter-spacing:0.00px;-webkit-text-stroke:0.15px #000">7</div>
<div class="t" style="left:1026.50px;top:328.20px;transform:translateX(-50%) scaleX(1.000) skewX(.03deg);font-size:8.40px;line-height:10.00px;font-weight:700;letter-spacing:0.00px;-webkit-text-stroke:0.15px #000">8</div>
<div class="t" style="left:1150.50px;top:328.20px;transform:translateX(-50%) scaleX(1.000) skewX(.03deg);font-size:8.40px;line-height:10.00px;font-weight:700;letter-spacing:0.00px;-webkit-text-stroke:0.15px #000">9</div>
<div class="t" style="left:1274.50px;top:328.20px;transform:translateX(-50%) scaleX(1.000) skewX(.03deg);font-size:8.40px;line-height:10.00px;font-weight:700;letter-spacing:0.00px;-webkit-text-stroke:0.15px #000">10</div>
<div class="t" style="left:1398.50px;top:328.20px;transform:translateX(-50%) scaleX(1.000) skewX(.03deg);font-size:8.40px;line-height:10.00px;font-weight:700;letter-spacing:0.00px;-webkit-text-stroke:0.15px #000">11</div>
<div class="t" style="right:1406.50px;top:342.10px;font-size:9.80px;line-height:13px;transform-origin:100% 50%;transform:scaleX(1.085) skewX(.03deg);-webkit-text-stroke:0.12px #000;">1</div>
<div class="t" style="right:666.60px;top:342.10px;font-size:9.80px;line-height:13px;transform-origin:100% 50%;transform:scaleX(1.085) skewX(.03deg);-webkit-text-stroke:0.12px #000;">1223,00</div>
<div class="t" style="right:542.60px;top:342.10px;font-size:9.80px;line-height:13px;transform-origin:100% 50%;transform:scaleX(1.085) skewX(.03deg);-webkit-text-stroke:0.12px #000;">16,00</div>
<div class="t" style="right:418.60px;top:342.10px;font-size:9.80px;line-height:13px;transform-origin:100% 50%;transform:scaleX(1.085) skewX(.03deg);-webkit-text-stroke:0.12px #000;">1027,32</div>
<div class="t" style="left:1150.50px;top:342.10px;transform:translateX(-50%) scaleX(1.085) skewX(.03deg);font-size:9.80px;line-height:13px;-webkit-text-stroke:0.12px #000">без НДС</div>
<div class="t" style="right:170.60px;top:342.10px;font-size:9.80px;line-height:13px;transform-origin:100% 50%;transform:scaleX(1.085) skewX(.03deg);-webkit-text-stroke:0.12px #000;">1</div>
<div class="t" style="right:46.60px;top:342.10px;font-size:9.80px;line-height:13px;transform-origin:100% 50%;transform:scaleX(1.085) skewX(.03deg);-webkit-text-stroke:0.12px #000;">1027,32</div>
<div class="t" style="right:1406.50px;top:357.10px;font-size:9.80px;line-height:13px;transform-origin:100% 50%;transform:scaleX(1.085) skewX(.03deg);-webkit-text-stroke:0.12px #000;">2</div>
<div class="t" style="right:666.60px;top:357.10px;font-size:9.80px;line-height:13px;transform-origin:100% 50%;transform:scaleX(1.085) skewX(.03deg);-webkit-text-stroke:0.12px #000;">625,00</div>
<div class="t" style="right:542.60px;top:357.10px;font-size:9.80px;line-height:13px;transform-origin:100% 50%;transform:scaleX(1.085) skewX(.03deg);-webkit-text-stroke:0.12px #000;">34,50</div>
<div class="t" style="right:418.60px;top:357.10px;font-size:9.80px;line-height:13px;transform-origin:100% 50%;transform:scaleX(1.085) skewX(.03deg);-webkit-text-stroke:0.12px #000;">409,37</div>
<div class="t" style="left:1150.50px;top:357.10px;transform:translateX(-50%) scaleX(1.085) skewX(.03deg);font-size:9.80px;line-height:13px;-webkit-text-stroke:0.12px #000">без НДС</div>
<div class="t" style="right:170.60px;top:357.10px;font-size:9.80px;line-height:13px;transform-origin:100% 50%;transform:scaleX(1.085) skewX(.03deg);-webkit-text-stroke:0.12px #000;">1</div>
<div class="t" style="right:46.60px;top:357.10px;font-size:9.80px;line-height:13px;transform-origin:100% 50%;transform:scaleX(1.085) skewX(.03deg);-webkit-text-stroke:0.12px #000;">409,37</div>
<div class="t" style="right:1406.50px;top:372.10px;font-size:9.80px;line-height:13px;transform-origin:100% 50%;transform:scaleX(1.085) skewX(.03deg);-webkit-text-stroke:0.12px #000;">3</div>
<div class="t" style="right:666.60px;top:372.10px;font-size:9.80px;line-height:13px;transform-origin:100% 50%;transform:scaleX(1.085) skewX(.03deg);-webkit-text-stroke:0.12px #000;">1151,00</div>
<div class="t" style="right:542.60px;top:372.10px;font-size:9.80px;line-height:13px;transform-origin:100% 50%;transform:scaleX(1.085) skewX(.03deg);-webkit-text-stroke:0.12px #000;">16,00</div>
<div class="t" style="right:418.60px;top:372.10px;font-size:9.80px;line-height:13px;transform-origin:100% 50%;transform:scaleX(1.085) skewX(.03deg);-webkit-text-stroke:0.12px #000;">966,84</div>
<div class="t" style="left:1150.50px;top:372.10px;transform:translateX(-50%) scaleX(1.085) skewX(.03deg);font-size:9.80px;line-height:13px;-webkit-text-stroke:0.12px #000">без НДС</div>
<div class="t" style="right:170.60px;top:372.10px;font-size:9.80px;line-height:13px;transform-origin:100% 50%;transform:scaleX(1.085) skewX(.03deg);-webkit-text-stroke:0.12px #000;">1</div>
<div class="t" style="right:46.60px;top:372.10px;font-size:9.80px;line-height:13px;transform-origin:100% 50%;transform:scaleX(1.085) skewX(.03deg);-webkit-text-stroke:0.12px #000;">966,84</div>
<div class="t" style="right:1406.50px;top:387.10px;font-size:9.80px;line-height:13px;transform-origin:100% 50%;transform:scaleX(1.085) skewX(.03deg);-webkit-text-stroke:0.12px #000;">4</div>
<div class="t" style="right:666.60px;top:387.10px;font-size:9.80px;line-height:13px;transform-origin:100% 50%;transform:scaleX(1.085) skewX(.03deg);-webkit-text-stroke:0.12px #000;">1179,00</div>
<div class="t" style="right:542.60px;top:387.10px;font-size:9.80px;line-height:13px;transform-origin:100% 50%;transform:scaleX(1.085) skewX(.03deg);-webkit-text-stroke:0.12px #000;">23,00</div>
<div class="t" style="right:418.60px;top:387.10px;font-size:9.80px;line-height:13px;transform-origin:100% 50%;transform:scaleX(1.085) skewX(.03deg);-webkit-text-stroke:0.12px #000;">907,83</div>
<div class="t" style="left:1150.50px;top:387.10px;transform:translateX(-50%) scaleX(1.085) skewX(.03deg);font-size:9.80px;line-height:13px;-webkit-text-stroke:0.12px #000">без НДС</div>
<div class="t" style="right:170.60px;top:387.10px;font-size:9.80px;line-height:13px;transform-origin:100% 50%;transform:scaleX(1.085) skewX(.03deg);-webkit-text-stroke:0.12px #000;">1</div>
<div class="t" style="right:46.60px;top:387.10px;font-size:9.80px;line-height:13px;transform-origin:100% 50%;transform:scaleX(1.085) skewX(.03deg);-webkit-text-stroke:0.12px #000;">907,83</div>
<div class="t" style="right:1406.50px;top:402.10px;font-size:9.80px;line-height:13px;transform-origin:100% 50%;transform:scaleX(1.085) skewX(.03deg);-webkit-text-stroke:0.12px #000;">5</div>
<div class="t" style="right:666.60px;top:402.10px;font-size:9.80px;line-height:13px;transform-origin:100% 50%;transform:scaleX(1.085) skewX(.03deg);-webkit-text-stroke:0.12px #000;">1231,00</div>
<div class="t" style="right:542.60px;top:402.10px;font-size:9.80px;line-height:13px;transform-origin:100% 50%;transform:scaleX(1.085) skewX(.03deg);-webkit-text-stroke:0.12px #000;">23,00</div>
<div class="t" style="right:418.60px;top:402.10px;font-size:9.80px;line-height:13px;transform-origin:100% 50%;transform:scaleX(1.085) skewX(.03deg);-webkit-text-stroke:0.12px #000;">947,87</div>
<div class="t" style="left:1150.50px;top:402.10px;transform:translateX(-50%) scaleX(1.085) skewX(.03deg);font-size:9.80px;line-height:13px;-webkit-text-stroke:0.12px #000">без НДС</div>
<div class="t" style="right:170.60px;top:402.10px;font-size:9.80px;line-height:13px;transform-origin:100% 50%;transform:scaleX(1.085) skewX(.03deg);-webkit-text-stroke:0.12px #000;">1</div>
<div class="t" style="right:46.60px;top:402.10px;font-size:9.80px;line-height:13px;transform-origin:100% 50%;transform:scaleX(1.085) skewX(.03deg);-webkit-text-stroke:0.12px #000;">947,87</div>
<div class="t" style="right:1406.50px;top:417.10px;font-size:9.80px;line-height:13px;transform-origin:100% 50%;transform:scaleX(1.085) skewX(.03deg);-webkit-text-stroke:0.12px #000;">6</div>
<div class="t" style="right:666.60px;top:417.10px;font-size:9.80px;line-height:13px;transform-origin:100% 50%;transform:scaleX(1.085) skewX(.03deg);-webkit-text-stroke:0.12px #000;">1231,00</div>
<div class="t" style="right:542.60px;top:417.10px;font-size:9.80px;line-height:13px;transform-origin:100% 50%;transform:scaleX(1.085) skewX(.03deg);-webkit-text-stroke:0.12px #000;">23,00</div>
<div class="t" style="right:418.60px;top:417.10px;font-size:9.80px;line-height:13px;transform-origin:100% 50%;transform:scaleX(1.085) skewX(.03deg);-webkit-text-stroke:0.12px #000;">947,87</div>
<div class="t" style="left:1150.50px;top:417.10px;transform:translateX(-50%) scaleX(1.085) skewX(.03deg);font-size:9.80px;line-height:13px;-webkit-text-stroke:0.12px #000">без НДС</div>
<div class="t" style="right:170.60px;top:417.10px;font-size:9.80px;line-height:13px;transform-origin:100% 50%;transform:scaleX(1.085) skewX(.03deg);-webkit-text-stroke:0.12px #000;">1</div>
<div class="t" style="right:46.60px;top:417.10px;font-size:9.80px;line-height:13px;transform-origin:100% 50%;transform:scaleX(1.085) skewX(.03deg);-webkit-text-stroke:0.12px #000;">947,87</div>
<div class="t" style="right:1406.50px;top:432.10px;font-size:9.80px;line-height:13px;transform-origin:100% 50%;transform:scaleX(1.085) skewX(.03deg);-webkit-text-stroke:0.12px #000;">7</div>
<div class="t" style="right:666.60px;top:432.10px;font-size:9.80px;line-height:13px;transform-origin:100% 50%;transform:scaleX(1.085) skewX(.03deg);-webkit-text-stroke:0.12px #000;">1137,00</div>
<div class="t" style="right:542.60px;top:432.10px;font-size:9.80px;line-height:13px;transform-origin:100% 50%;transform:scaleX(1.085) skewX(.03deg);-webkit-text-stroke:0.12px #000;">16,00</div>
<div class="t" style="right:418.60px;top:432.10px;font-size:9.80px;line-height:13px;transform-origin:100% 50%;transform:scaleX(1.085) skewX(.03deg);-webkit-text-stroke:0.12px #000;">955,08</div>
<div class="t" style="left:1150.50px;top:432.10px;transform:translateX(-50%) scaleX(1.085) skewX(.03deg);font-size:9.80px;line-height:13px;-webkit-text-stroke:0.12px #000">без НДС</div>
<div class="t" style="right:170.60px;top:432.10px;font-size:9.80px;line-height:13px;transform-origin:100% 50%;transform:scaleX(1.085) skewX(.03deg);-webkit-text-stroke:0.12px #000;">1</div>
<div class="t" style="right:46.60px;top:432.10px;font-size:9.80px;line-height:13px;transform-origin:100% 50%;transform:scaleX(1.085) skewX(.03deg);-webkit-text-stroke:0.12px #000;">955,08</div>
<div class="t" style="right:1406.50px;top:447.10px;font-size:9.80px;line-height:13px;transform-origin:100% 50%;transform:scaleX(1.085) skewX(.03deg);-webkit-text-stroke:0.12px #000;">8</div>
<div class="t" style="right:666.60px;top:447.10px;font-size:9.80px;line-height:13px;transform-origin:100% 50%;transform:scaleX(1.085) skewX(.03deg);-webkit-text-stroke:0.12px #000;">795,00</div>
<div class="t" style="right:542.60px;top:447.10px;font-size:9.80px;line-height:13px;transform-origin:100% 50%;transform:scaleX(1.085) skewX(.03deg);-webkit-text-stroke:0.12px #000;">23,00</div>
<div class="t" style="right:418.60px;top:447.10px;font-size:9.80px;line-height:13px;transform-origin:100% 50%;transform:scaleX(1.085) skewX(.03deg);-webkit-text-stroke:0.12px #000;">612,15</div>
<div class="t" style="left:1150.50px;top:447.10px;transform:translateX(-50%) scaleX(1.085) skewX(.03deg);font-size:9.80px;line-height:13px;-webkit-text-stroke:0.12px #000">без НДС</div>
<div class="t" style="right:170.60px;top:447.10px;font-size:9.80px;line-height:13px;transform-origin:100% 50%;transform:scaleX(1.085) skewX(.03deg);-webkit-text-stroke:0.12px #000;">1</div>
<div class="t" style="right:46.60px;top:447.10px;font-size:9.80px;line-height:13px;transform-origin:100% 50%;transform:scaleX(1.085) skewX(.03deg);-webkit-text-stroke:0.12px #000;">612,15</div>
<div class="t" style="right:1406.50px;top:462.10px;font-size:9.80px;line-height:13px;transform-origin:100% 50%;transform:scaleX(1.085) skewX(.03deg);-webkit-text-stroke:0.12px #000;">9</div>
<div class="t" style="right:666.60px;top:462.10px;font-size:9.80px;line-height:13px;transform-origin:100% 50%;transform:scaleX(1.085) skewX(.03deg);-webkit-text-stroke:0.12px #000;">1281,00</div>
<div class="t" style="right:542.60px;top:462.10px;font-size:9.80px;line-height:13px;transform-origin:100% 50%;transform:scaleX(1.085) skewX(.03deg);-webkit-text-stroke:0.12px #000;">23,00</div>
<div class="t" style="right:418.60px;top:462.10px;font-size:9.80px;line-height:13px;transform-origin:100% 50%;transform:scaleX(1.085) skewX(.03deg);-webkit-text-stroke:0.12px #000;">986,37</div>
<div class="t" style="left:1150.50px;top:462.10px;transform:translateX(-50%) scaleX(1.085) skewX(.03deg);font-size:9.80px;line-height:13px;-webkit-text-stroke:0.12px #000">без НДС</div>
<div class="t" style="right:170.60px;top:462.10px;font-size:9.80px;line-height:13px;transform-origin:100% 50%;transform:scaleX(1.085) skewX(.03deg);-webkit-text-stroke:0.12px #000;">1</div>
<div class="t" style="right:46.60px;top:462.10px;font-size:9.80px;line-height:13px;transform-origin:100% 50%;transform:scaleX(1.085) skewX(.03deg);-webkit-text-stroke:0.12px #000;">986,37</div>
<div class="t" style="right:1406.50px;top:477.10px;font-size:9.80px;line-height:13px;transform-origin:100% 50%;transform:scaleX(1.085) skewX(.03deg);-webkit-text-stroke:0.12px #000;">10</div>
<div class="t" style="right:666.60px;top:477.10px;font-size:9.80px;line-height:13px;transform-origin:100% 50%;transform:scaleX(1.085) skewX(.03deg);-webkit-text-stroke:0.12px #000;">1213,00</div>
<div class="t" style="right:542.60px;top:477.10px;font-size:9.80px;line-height:13px;transform-origin:100% 50%;transform:scaleX(1.085) skewX(.03deg);-webkit-text-stroke:0.12px #000;">23,00</div>
<div class="t" style="right:418.60px;top:477.10px;font-size:9.80px;line-height:13px;transform-origin:100% 50%;transform:scaleX(1.085) skewX(.03deg);-webkit-text-stroke:0.12px #000;">934,01</div>
<div class="t" style="left:1150.50px;top:477.10px;transform:translateX(-50%) scaleX(1.085) skewX(.03deg);font-size:9.80px;line-height:13px;-webkit-text-stroke:0.12px #000">без НДС</div>
<div class="t" style="right:170.60px;top:477.10px;font-size:9.80px;line-height:13px;transform-origin:100% 50%;transform:scaleX(1.085) skewX(.03deg);-webkit-text-stroke:0.12px #000;">1</div>
<div class="t" style="right:46.60px;top:477.10px;font-size:9.80px;line-height:13px;transform-origin:100% 50%;transform:scaleX(1.085) skewX(.03deg);-webkit-text-stroke:0.12px #000;">934,01</div>
<div class="t" style="right:1406.50px;top:492.10px;font-size:9.80px;line-height:13px;transform-origin:100% 50%;transform:scaleX(1.085) skewX(.03deg);-webkit-text-stroke:0.12px #000;">11</div>
<div class="t" style="right:666.60px;top:492.10px;font-size:9.80px;line-height:13px;transform-origin:100% 50%;transform:scaleX(1.085) skewX(.03deg);-webkit-text-stroke:0.12px #000;">795,00</div>
<div class="t" style="right:542.60px;top:492.10px;font-size:9.80px;line-height:13px;transform-origin:100% 50%;transform:scaleX(1.085) skewX(.03deg);-webkit-text-stroke:0.12px #000;">23,00</div>
<div class="t" style="right:418.60px;top:492.10px;font-size:9.80px;line-height:13px;transform-origin:100% 50%;transform:scaleX(1.085) skewX(.03deg);-webkit-text-stroke:0.12px #000;">612,15</div>
<div class="t" style="left:1150.50px;top:492.10px;transform:translateX(-50%) scaleX(1.085) skewX(.03deg);font-size:9.80px;line-height:13px;-webkit-text-stroke:0.12px #000">без НДС</div>
<div class="t" style="right:170.60px;top:492.10px;font-size:9.80px;line-height:13px;transform-origin:100% 50%;transform:scaleX(1.085) skewX(.03deg);-webkit-text-stroke:0.12px #000;">1</div>
<div class="t" style="right:46.60px;top:492.10px;font-size:9.80px;line-height:13px;transform-origin:100% 50%;transform:scaleX(1.085) skewX(.03deg);-webkit-text-stroke:0.12px #000;">612,15</div>
<div class="t" style="right:1406.50px;top:507.10px;font-size:9.80px;line-height:13px;transform-origin:100% 50%;transform:scaleX(1.085) skewX(.03deg);-webkit-text-stroke:0.12px #000;">12</div>
<div class="t" style="right:666.60px;top:507.10px;font-size:9.80px;line-height:13px;transform-origin:100% 50%;transform:scaleX(1.085) skewX(.03deg);-webkit-text-stroke:0.12px #000;">1161,00</div>
<div class="t" style="right:542.60px;top:507.10px;font-size:9.80px;line-height:13px;transform-origin:100% 50%;transform:scaleX(1.085) skewX(.03deg);-webkit-text-stroke:0.12px #000;">16,00</div>
<div class="t" style="right:418.60px;top:507.10px;font-size:9.80px;line-height:13px;transform-origin:100% 50%;transform:scaleX(1.085) skewX(.03deg);-webkit-text-stroke:0.12px #000;">975,24</div>
<div class="t" style="left:1150.50px;top:507.10px;transform:translateX(-50%) scaleX(1.085) skewX(.03deg);font-size:9.80px;line-height:13px;-webkit-text-stroke:0.12px #000">без НДС</div>
<div class="t" style="right:170.60px;top:507.10px;font-size:9.80px;line-height:13px;transform-origin:100% 50%;transform:scaleX(1.085) skewX(.03deg);-webkit-text-stroke:0.12px #000;">1</div>
<div class="t" style="right:46.60px;top:507.10px;font-size:9.80px;line-height:13px;transform-origin:100% 50%;transform:scaleX(1.085) skewX(.03deg);-webkit-text-stroke:0.12px #000;">975,24</div>
<div class="t" style="right:1406.50px;top:522.10px;font-size:9.80px;line-height:13px;transform-origin:100% 50%;transform:scaleX(1.085) skewX(.03deg);-webkit-text-stroke:0.12px #000;">13</div>
<div class="t" style="right:666.60px;top:522.10px;font-size:9.80px;line-height:13px;transform-origin:100% 50%;transform:scaleX(1.085) skewX(.03deg);-webkit-text-stroke:0.12px #000;">1599,00</div>
<div class="t" style="right:542.60px;top:522.10px;font-size:9.80px;line-height:13px;transform-origin:100% 50%;transform:scaleX(1.085) skewX(.03deg);-webkit-text-stroke:0.12px #000;">23,00</div>
<div class="t" style="right:418.60px;top:522.10px;font-size:9.80px;line-height:13px;transform-origin:100% 50%;transform:scaleX(1.085) skewX(.03deg);-webkit-text-stroke:0.12px #000;">1231,23</div>
<div class="t" style="left:1150.50px;top:522.10px;transform:translateX(-50%) scaleX(1.085) skewX(.03deg);font-size:9.80px;line-height:13px;-webkit-text-stroke:0.12px #000">без НДС</div>
<div class="t" style="right:170.60px;top:522.10px;font-size:9.80px;line-height:13px;transform-origin:100% 50%;transform:scaleX(1.085) skewX(.03deg);-webkit-text-stroke:0.12px #000;">1</div>
<div class="t" style="right:46.60px;top:522.10px;font-size:9.80px;line-height:13px;transform-origin:100% 50%;transform:scaleX(1.085) skewX(.03deg);-webkit-text-stroke:0.12px #000;">1231,23</div>
<div class="t" style="right:1406.50px;top:537.10px;font-size:9.80px;line-height:13px;transform-origin:100% 50%;transform:scaleX(1.085) skewX(.03deg);-webkit-text-stroke:0.12px #000;">14</div>
<div class="t" style="right:666.60px;top:537.10px;font-size:9.80px;line-height:13px;transform-origin:100% 50%;transform:scaleX(1.085) skewX(.03deg);-webkit-text-stroke:0.12px #000;">625,00</div>
<div class="t" style="right:542.60px;top:537.10px;font-size:9.80px;line-height:13px;transform-origin:100% 50%;transform:scaleX(1.085) skewX(.03deg);-webkit-text-stroke:0.12px #000;">34,50</div>
<div class="t" style="right:418.60px;top:537.10px;font-size:9.80px;line-height:13px;transform-origin:100% 50%;transform:scaleX(1.085) skewX(.03deg);-webkit-text-stroke:0.12px #000;">409,37</div>
<div class="t" style="left:1150.50px;top:537.10px;transform:translateX(-50%) scaleX(1.085) skewX(.03deg);font-size:9.80px;line-height:13px;-webkit-text-stroke:0.12px #000">без НДС</div>
<div class="t" style="right:170.60px;top:537.10px;font-size:9.80px;line-height:13px;transform-origin:100% 50%;transform:scaleX(1.085) skewX(.03deg);-webkit-text-stroke:0.12px #000;">1</div>
<div class="t" style="right:46.60px;top:537.10px;font-size:9.80px;line-height:13px;transform-origin:100% 50%;transform:scaleX(1.085) skewX(.03deg);-webkit-text-stroke:0.12px #000;">409,37</div>
<div class="t" style="right:1406.50px;top:552.10px;font-size:9.80px;line-height:13px;transform-origin:100% 50%;transform:scaleX(1.085) skewX(.03deg);-webkit-text-stroke:0.12px #000;">15</div>
<div class="t" style="right:666.60px;top:552.10px;font-size:9.80px;line-height:13px;transform-origin:100% 50%;transform:scaleX(1.085) skewX(.03deg);-webkit-text-stroke:0.12px #000;">1151,00</div>
<div class="t" style="right:542.60px;top:552.10px;font-size:9.80px;line-height:13px;transform-origin:100% 50%;transform:scaleX(1.085) skewX(.03deg);-webkit-text-stroke:0.12px #000;">16,00</div>
<div class="t" style="right:418.60px;top:552.10px;font-size:9.80px;line-height:13px;transform-origin:100% 50%;transform:scaleX(1.085) skewX(.03deg);-webkit-text-stroke:0.12px #000;">966,84</div>
<div class="t" style="left:1150.50px;top:552.10px;transform:translateX(-50%) scaleX(1.085) skewX(.03deg);font-size:9.80px;line-height:13px;-webkit-text-stroke:0.12px #000">без НДС</div>
<div class="t" style="right:170.60px;top:552.10px;font-size:9.80px;line-height:13px;transform-origin:100% 50%;transform:scaleX(1.085) skewX(.03deg);-webkit-text-stroke:0.12px #000;">1</div>
<div class="t" style="right:46.60px;top:552.10px;font-size:9.80px;line-height:13px;transform-origin:100% 50%;transform:scaleX(1.085) skewX(.03deg);-webkit-text-stroke:0.12px #000;">966,84</div>
<div class="t" style="right:1406.50px;top:567.10px;font-size:9.80px;line-height:13px;transform-origin:100% 50%;transform:scaleX(1.085) skewX(.03deg);-webkit-text-stroke:0.12px #000;">16</div>
<div class="t" style="right:666.60px;top:567.10px;font-size:9.80px;line-height:13px;transform-origin:100% 50%;transform:scaleX(1.085) skewX(.03deg);-webkit-text-stroke:0.12px #000;">1151,00</div>
<div class="t" style="right:542.60px;top:567.10px;font-size:9.80px;line-height:13px;transform-origin:100% 50%;transform:scaleX(1.085) skewX(.03deg);-webkit-text-stroke:0.12px #000;">16,00</div>
<div class="t" style="right:418.60px;top:567.10px;font-size:9.80px;line-height:13px;transform-origin:100% 50%;transform:scaleX(1.085) skewX(.03deg);-webkit-text-stroke:0.12px #000;">966,84</div>
<div class="t" style="left:1150.50px;top:567.10px;transform:translateX(-50%) scaleX(1.085) skewX(.03deg);font-size:9.80px;line-height:13px;-webkit-text-stroke:0.12px #000">без НДС</div>
<div class="t" style="right:170.60px;top:567.10px;font-size:9.80px;line-height:13px;transform-origin:100% 50%;transform:scaleX(1.085) skewX(.03deg);-webkit-text-stroke:0.12px #000;">1</div>
<div class="t" style="right:46.60px;top:567.10px;font-size:9.80px;line-height:13px;transform-origin:100% 50%;transform:scaleX(1.085) skewX(.03deg);-webkit-text-stroke:0.12px #000;">966,84</div>
<div class="t" style="right:1406.50px;top:582.10px;font-size:9.80px;line-height:13px;transform-origin:100% 50%;transform:scaleX(1.085) skewX(.03deg);-webkit-text-stroke:0.12px #000;">17</div>
<div class="t" style="right:666.60px;top:582.10px;font-size:9.80px;line-height:13px;transform-origin:100% 50%;transform:scaleX(1.085) skewX(.03deg);-webkit-text-stroke:0.12px #000;">1203,00</div>
<div class="t" style="right:542.60px;top:582.10px;font-size:9.80px;line-height:13px;transform-origin:100% 50%;transform:scaleX(1.085) skewX(.03deg);-webkit-text-stroke:0.12px #000;">23,00</div>
<div class="t" style="right:418.60px;top:582.10px;font-size:9.80px;line-height:13px;transform-origin:100% 50%;transform:scaleX(1.085) skewX(.03deg);-webkit-text-stroke:0.12px #000;">926,31</div>
<div class="t" style="left:1150.50px;top:582.10px;transform:translateX(-50%) scaleX(1.085) skewX(.03deg);font-size:9.80px;line-height:13px;-webkit-text-stroke:0.12px #000">без НДС</div>
<div class="t" style="right:170.60px;top:582.10px;font-size:9.80px;line-height:13px;transform-origin:100% 50%;transform:scaleX(1.085) skewX(.03deg);-webkit-text-stroke:0.12px #000;">1</div>
<div class="t" style="right:46.60px;top:582.10px;font-size:9.80px;line-height:13px;transform-origin:100% 50%;transform:scaleX(1.085) skewX(.03deg);-webkit-text-stroke:0.12px #000;">926,31</div>
<div class="t" style="right:1406.50px;top:597.10px;font-size:9.80px;line-height:13px;transform-origin:100% 50%;transform:scaleX(1.085) skewX(.03deg);-webkit-text-stroke:0.12px #000;">18</div>
<div class="t" style="right:666.60px;top:597.10px;font-size:9.80px;line-height:13px;transform-origin:100% 50%;transform:scaleX(1.085) skewX(.03deg);-webkit-text-stroke:0.12px #000;">1137,00</div>
<div class="t" style="right:542.60px;top:597.10px;font-size:9.80px;line-height:13px;transform-origin:100% 50%;transform:scaleX(1.085) skewX(.03deg);-webkit-text-stroke:0.12px #000;">29,00</div>
<div class="t" style="right:418.60px;top:597.10px;font-size:9.80px;line-height:13px;transform-origin:100% 50%;transform:scaleX(1.085) skewX(.03deg);-webkit-text-stroke:0.12px #000;">807,27</div>
<div class="t" style="left:1150.50px;top:597.10px;transform:translateX(-50%) scaleX(1.085) skewX(.03deg);font-size:9.80px;line-height:13px;-webkit-text-stroke:0.12px #000">без НДС</div>
<div class="t" style="right:170.60px;top:597.10px;font-size:9.80px;line-height:13px;transform-origin:100% 50%;transform:scaleX(1.085) skewX(.03deg);-webkit-text-stroke:0.12px #000;">1</div>
<div class="t" style="right:46.60px;top:597.10px;font-size:9.80px;line-height:13px;transform-origin:100% 50%;transform:scaleX(1.085) skewX(.03deg);-webkit-text-stroke:0.12px #000;">807,27</div>
<div class="t" style="right:1406.50px;top:612.10px;font-size:9.80px;line-height:13px;transform-origin:100% 50%;transform:scaleX(1.085) skewX(.03deg);-webkit-text-stroke:0.12px #000;">19</div>
<div class="t" style="right:666.60px;top:612.10px;font-size:9.80px;line-height:13px;transform-origin:100% 50%;transform:scaleX(1.085) skewX(.03deg);-webkit-text-stroke:0.12px #000;">1281,00</div>
<div class="t" style="right:542.60px;top:612.10px;font-size:9.80px;line-height:13px;transform-origin:100% 50%;transform:scaleX(1.085) skewX(.03deg);-webkit-text-stroke:0.12px #000;">29,00</div>
<div class="t" style="right:418.60px;top:612.10px;font-size:9.80px;line-height:13px;transform-origin:100% 50%;transform:scaleX(1.085) skewX(.03deg);-webkit-text-stroke:0.12px #000;">909,51</div>
<div class="t" style="left:1150.50px;top:612.10px;transform:translateX(-50%) scaleX(1.085) skewX(.03deg);font-size:9.80px;line-height:13px;-webkit-text-stroke:0.12px #000">без НДС</div>
<div class="t" style="right:170.60px;top:612.10px;font-size:9.80px;line-height:13px;transform-origin:100% 50%;transform:scaleX(1.085) skewX(.03deg);-webkit-text-stroke:0.12px #000;">1</div>
<div class="t" style="right:46.60px;top:612.10px;font-size:9.80px;line-height:13px;transform-origin:100% 50%;transform:scaleX(1.085) skewX(.03deg);-webkit-text-stroke:0.12px #000;">909,51</div>
<div class="t" style="right:1406.50px;top:627.10px;font-size:9.80px;line-height:13px;transform-origin:100% 50%;transform:scaleX(1.085) skewX(.03deg);-webkit-text-stroke:0.12px #000;">20</div>
<div class="t" style="right:666.60px;top:627.10px;font-size:9.80px;line-height:13px;transform-origin:100% 50%;transform:scaleX(1.085) skewX(.03deg);-webkit-text-stroke:0.12px #000;">732,00</div>
<div class="t" style="right:542.60px;top:627.10px;font-size:9.80px;line-height:13px;transform-origin:100% 50%;transform:scaleX(1.085) skewX(.03deg);-webkit-text-stroke:0.12px #000;">34,50</div>
<div class="t" style="right:418.60px;top:627.10px;font-size:9.80px;line-height:13px;transform-origin:100% 50%;transform:scaleX(1.085) skewX(.03deg);-webkit-text-stroke:0.12px #000;">479,46</div>
<div class="t" style="left:1150.50px;top:627.10px;transform:translateX(-50%) scaleX(1.085) skewX(.03deg);font-size:9.80px;line-height:13px;-webkit-text-stroke:0.12px #000">без НДС</div>
<div class="t" style="right:170.60px;top:627.10px;font-size:9.80px;line-height:13px;transform-origin:100% 50%;transform:scaleX(1.085) skewX(.03deg);-webkit-text-stroke:0.12px #000;">1</div>
<div class="t" style="right:46.60px;top:627.10px;font-size:9.80px;line-height:13px;transform-origin:100% 50%;transform:scaleX(1.085) skewX(.03deg);-webkit-text-stroke:0.12px #000;">479,46</div>
<div class="t" style="right:1406.50px;top:642.10px;font-size:9.80px;line-height:13px;transform-origin:100% 50%;transform:scaleX(1.085) skewX(.03deg);-webkit-text-stroke:0.12px #000;">21</div>
<div class="t" style="right:666.60px;top:642.10px;font-size:9.80px;line-height:13px;transform-origin:100% 50%;transform:scaleX(1.085) skewX(.03deg);-webkit-text-stroke:0.12px #000;">1249,00</div>
<div class="t" style="right:542.60px;top:642.10px;font-size:9.80px;line-height:13px;transform-origin:100% 50%;transform:scaleX(1.085) skewX(.03deg);-webkit-text-stroke:0.12px #000;">29,00</div>
<div class="t" style="right:418.60px;top:642.10px;font-size:9.80px;line-height:13px;transform-origin:100% 50%;transform:scaleX(1.085) skewX(.03deg);-webkit-text-stroke:0.12px #000;">886,79</div>
<div class="t" style="left:1150.50px;top:642.10px;transform:translateX(-50%) scaleX(1.085) skewX(.03deg);font-size:9.80px;line-height:13px;-webkit-text-stroke:0.12px #000">без НДС</div>
<div class="t" style="right:170.60px;top:642.10px;font-size:9.80px;line-height:13px;transform-origin:100% 50%;transform:scaleX(1.085) skewX(.03deg);-webkit-text-stroke:0.12px #000;">1</div>
<div class="t" style="right:46.60px;top:642.10px;font-size:9.80px;line-height:13px;transform-origin:100% 50%;transform:scaleX(1.085) skewX(.03deg);-webkit-text-stroke:0.12px #000;">886,79</div>
<div class="t" style="right:1406.50px;top:657.10px;font-size:9.80px;line-height:13px;transform-origin:100% 50%;transform:scaleX(1.085) skewX(.03deg);-webkit-text-stroke:0.12px #000;">22</div>
<div class="t" style="right:666.60px;top:657.10px;font-size:9.80px;line-height:13px;transform-origin:100% 50%;transform:scaleX(1.085) skewX(.03deg);-webkit-text-stroke:0.12px #000;">732,00</div>
<div class="t" style="right:542.60px;top:657.10px;font-size:9.80px;line-height:13px;transform-origin:100% 50%;transform:scaleX(1.085) skewX(.03deg);-webkit-text-stroke:0.12px #000;">34,50</div>
<div class="t" style="right:418.60px;top:657.10px;font-size:9.80px;line-height:13px;transform-origin:100% 50%;transform:scaleX(1.085) skewX(.03deg);-webkit-text-stroke:0.12px #000;">479,46</div>
<div class="t" style="left:1150.50px;top:657.10px;transform:translateX(-50%) scaleX(1.085) skewX(.03deg);font-size:9.80px;line-height:13px;-webkit-text-stroke:0.12px #000">без НДС</div>
<div class="t" style="right:170.60px;top:657.10px;font-size:9.80px;line-height:13px;transform-origin:100% 50%;transform:scaleX(1.085) skewX(.03deg);-webkit-text-stroke:0.12px #000;">1</div>
<div class="t" style="right:46.60px;top:657.10px;font-size:9.80px;line-height:13px;transform-origin:100% 50%;transform:scaleX(1.085) skewX(.03deg);-webkit-text-stroke:0.12px #000;">479,46</div>
<div class="t" style="right:170.00px;top:672.50px;font-size:9.80px;line-height:13px;transform-origin:100% 50%;transform:scaleX(1.020) skewX(.03deg);font-weight:700;-webkit-text-stroke:0.15px #000;">Итого с НДС:</div>
<div class="t" style="right:46.60px;top:672.10px;font-size:9.80px;line-height:13px;transform-origin:100% 50%;transform:scaleX(1.085) skewX(.03deg);-webkit-text-stroke:0.12px #000;">18345,18</div>
<div class="a" style="left:103px;top:344px;width:1px;height:8px;background:#bdbdbd"></div>
<div class="a" style="left:103px;top:359px;width:1px;height:8px;background:#bdbdbd"></div>
<div class="a" style="left:103px;top:374px;width:1px;height:8px;background:#bdbdbd"></div>
<div class="a" style="left:103px;top:389px;width:1px;height:8px;background:#bdbdbd"></div>
<div class="a" style="left:103px;top:404px;width:1px;height:8px;background:#bdbdbd"></div>
<div class="a" style="left:103px;top:419px;width:1px;height:8px;background:#bdbdbd"></div>
<div class="a" style="left:103px;top:434px;width:1px;height:8px;background:#bdbdbd"></div>
<div class="a" style="left:103px;top:449px;width:1px;height:8px;background:#bdbdbd"></div>
<div class="a" style="left:103px;top:464px;width:1px;height:8px;background:#bdbdbd"></div>
<div class="a" style="left:103px;top:479px;width:1px;height:8px;background:#bdbdbd"></div>
<div class="a" style="left:103px;top:494px;width:1px;height:8px;background:#bdbdbd"></div>
<div class="a" style="left:103px;top:509px;width:1px;height:8px;background:#bdbdbd"></div>
<div class="a" style="left:103px;top:524px;width:1px;height:8px;background:#bdbdbd"></div>
<div class="a" style="left:103px;top:539px;width:1px;height:8px;background:#bdbdbd"></div>
<div class="a" style="left:103px;top:554px;width:1px;height:8px;background:#bdbdbd"></div>
<div class="a" style="left:103px;top:569px;width:1px;height:8px;background:#bdbdbd"></div>
<div class="a" style="left:103px;top:584px;width:1px;height:8px;background:#bdbdbd"></div>
<div class="a" style="left:103px;top:599px;width:1px;height:8px;background:#bdbdbd"></div>
<div class="a" style="left:103px;top:614px;width:1px;height:8px;background:#bdbdbd"></div>
<div class="a" style="left:103px;top:629px;width:1px;height:8px;background:#bdbdbd"></div>
<div class="a" style="left:103px;top:644px;width:1px;height:8px;background:#bdbdbd"></div>
<div class="a" style="left:103px;top:659px;width:1px;height:8px;background:#bdbdbd"></div>
<div class="a" style="left:104px;top:344px;width:3px;height:1px;background:#bdbdbd"></div>
<div class="a" style="left:202px;top:344px;width:1px;height:1px;background:#d9d9d9"></div>
<div class="a" style="left:208px;top:344px;width:1px;height:1px;background:#d9d9d9"></div>
<div class="a" style="left:237px;top:344px;width:2px;height:1px;background:#d9d9d9"></div>
<div class="a" style="left:405px;top:344px;width:3px;height:1px;background:#d9d9d9"></div>
<div class="a" style="left:411px;top:344px;width:3px;height:1px;background:#d9d9d9"></div>
<div class="a" style="left:420px;top:344px;width:1px;height:1px;background:#d9d9d9"></div>
<div class="a" style="left:425px;top:344px;width:1px;height:1px;background:#d9d9d9"></div>
<div class="a" style="left:433px;top:344px;width:2px;height:1px;background:#d9d9d9"></div>
<div class="a" style="left:440px;top:344px;width:1px;height:1px;background:#d9d9d9"></div>
<div class="a" style="left:446px;top:344px;width:1px;height:1px;background:#d9d9d9"></div>
<div class="a" style="left:528px;top:344px;width:1px;height:1px;background:#d9d9d9"></div>
<div class="a" style="left:534px;top:344px;width:1px;height:1px;background:#d9d9d9"></div>
<div class="a" style="left:540px;top:344px;width:1px;height:1px;background:#d9d9d9"></div>
<div class="a" style="left:546px;top:344px;width:1px;height:1px;background:#d9d9d9"></div>
<div class="a" style="left:552px;top:344px;width:1px;height:1px;background:#d9d9d9"></div>
<div class="a" style="left:558px;top:344px;width:1px;height:1px;background:#d9d9d9"></div>
<div class="a" style="left:564px;top:344px;width:1px;height:1px;background:#d9d9d9"></div>
<div class="a" style="left:570px;top:344px;width:1px;height:1px;background:#d9d9d9"></div>
<div class="a" style="left:596px;top:344px;width:1px;height:1px;background:#d9d9d9"></div>
<div class="a" style="left:602px;top:344px;width:1px;height:1px;background:#d9d9d9"></div>
<div class="a" style="left:608px;top:344px;width:1px;height:1px;background:#d9d9d9"></div>
<div class="a" style="left:614px;top:344px;width:1px;height:1px;background:#d9d9d9"></div>
<div class="a" style="left:620px;top:344px;width:1px;height:1px;background:#d9d9d9"></div>
<div class="a" style="left:626px;top:344px;width:1px;height:1px;background:#d9d9d9"></div>
<div class="a" style="left:634px;top:344px;width:1px;height:1px;background:#d9d9d9"></div>
<div class="a" style="left:640px;top:344px;width:1px;height:1px;background:#d9d9d9"></div>
<div class="a" style="left:648px;top:344px;width:1px;height:1px;background:#d9d9d9"></div>
<div class="a" style="left:656px;top:344px;width:1px;height:1px;background:#d9d9d9"></div>
<div class="a" style="left:664px;top:344px;width:1px;height:1px;background:#d9d9d9"></div>
<div class="a" style="left:672px;top:344px;width:1px;height:1px;background:#d9d9d9"></div>
<div class="a" style="left:680px;top:344px;width:1px;height:1px;background:#d9d9d9"></div>
<div class="a" style="left:690px;top:344px;width:1px;height:1px;background:#d9d9d9"></div>
<div class="a" style="left:700px;top:344px;width:1px;height:1px;background:#d9d9d9"></div>
<div class="a" style="left:104px;top:345px;width:601px;height:322px;background:#f5f5f5"></div>
<div class="a" style="left:181px;top:667px;width:1px;height:2px;background:#777"></div>
<div class="a" style="left:227px;top:667px;width:1px;height:2px;background:#888"></div>
<div class="a" style="left:231px;top:667px;width:1px;height:2px;background:#888"></div>
<div class="a" style="left:254px;top:667px;width:1px;height:2px;background:#888"></div>
<div class="a" style="left:259px;top:667px;width:1px;height:2px;background:#888"></div>
<div class="a" style="left:124px;top:667px;width:1px;height:2px;background:#ddd"></div>
<div class="a" style="left:131px;top:667px;width:1px;height:2px;background:#ddd"></div>
<div class="a" style="left:160px;top:667px;width:1px;height:2px;background:#ddd"></div>
<div class="a" style="left:290px;top:667px;width:1px;height:2px;background:#ddd"></div>
<div class="a" style="left:346px;top:667px;width:1px;height:2px;background:#ddd"></div>
<div class="a" style="left:372px;top:667px;width:1px;height:2px;background:#ddd"></div>
<div class="a" style="left:384px;top:667px;width:1px;height:2px;background:#ddd"></div>
<svg style="left:0;top:0" width="1504" height="782" viewBox="0 0 1504 782">
<line x1="719" y1="157.2" x2="896.7" y2="157.2" stroke="#ff0000" stroke-width="2.8"/>
<line x1="922.5" y1="169.6" x2="1249" y2="633" stroke="#ff0000" stroke-width="3"/>
<path d="M1255.7 642.8 L1240.7 635.9 L1254.6 626.1 Z" fill="#ff0000"/>
<rect x="1257.5" y="661.5" width="212.2" height="33.9" rx="7" fill="none" stroke="#ff0000" stroke-width="3"/>
</svg>
<div class="a" style="left:0;top:733px;width:1504px;height:27px;background:linear-gradient(#e6e6e6 0,#ededed 3px,#ececec)"></div>
<div class="a" style="left:0;top:733px;width:1504px;height:1px;background:#d9d9d9"></div>
<div class="a" style="left:58.5px;top:733px;width:224.5px;height:22px;background:#fff;border-radius:0 0 3px 3px;box-shadow:0 0.5px 1.5px rgba(0,0,0,.35)"></div>
<div class="a" style="left:58.5px;top:731px;width:224.5px;height:2.6px;background:#fff"></div>
<div class="t" style="left:80.60px;top:738.00px;font-size:12.30px;line-height:16px;font-weight:700;letter-spacing:-0.252px;color:#34824c;">Отчет о выкупленных товарах</div>
<svg style="left:10px;top:739px" width="40" height="14" viewBox="0 0 40 14"><path d="M10 1.6 V12.4 L2.6 7 Z M25.4 1.6 V12.4 L32.8 7 Z" fill="#c3c3c3"/></svg>
<svg style="left:296px;top:739px" width="14" height="14" viewBox="0 0 14 14"><path d="M7 1.8 V12.2 M1.8 7 H12.2" stroke="#3c3c3c" stroke-width="1.5"/></svg>
<div class="a" style="left:321px;top:737px;width:1px;height:19px;background:#d2d2d2"></div>
<div class="a" style="left:0;top:760px;width:1504px;height:22px;background:linear-gradient(#dcdcdc,#e1e1e1)"></div>
<div class="a" style="left:0;top:759px;width:1504px;height:1px;background:#bcbcbc"></div>
<div class="t" style="left:22.60px;top:763.00px;font-size:12.40px;line-height:16px;letter-spacing:0.018px;color:#3c3c3c;">Готово</div>
<svg style="left:80px;top:762px" width="20" height="18" viewBox="0 0 20 18" fill="none" stroke="#4a4a4a" stroke-width="1.2"><circle cx="4.6" cy="4.2" r="1.5" fill="#4a4a4a"/><path d="M4.6 5.8 V13.6 M2 13.6 H14.6 M10.4 13.6 V3.6 M7.6 3.6 H16.4 M16.4 3.6 V7"/></svg>
<svg style="left:112px;top:762px" width="20" height="18" viewBox="0 0 20 18" fill="none" stroke="#4a4a4a" stroke-width="1.05" stroke-linejoin="round" stroke-linecap="round"><circle cx="8.6" cy="3.2" r="1.5"/><path d="M3 5.6 L7 7 V10 L4.6 15.6 M14.2 5.6 L10.2 7 V9.2 M7 10 H10.2 M10.6 11.2 L14.6 15.4 M14.6 11.2 L10.6 15.4 M8.6 11 L7.2 14"/></svg>
<div class="t" style="left:134.00px;top:763.00px;font-size:12.40px;line-height:16px;letter-spacing:0.214px;color:#3c3c3c;">Специальные возможности: проверьте рекомендации</div>
<div class="a" style="left:1182px;top:760px;width:37px;height:22px;background:#ababab"></div>
<svg style="left:1194px;top:764px" width="14" height="14" viewBox="0 0 14 14" fill="none" stroke="#fff" stroke-width="1.15"><rect x="0.6" y="0.9" width="12" height="11.6"/><path d="M4.6 0.9 V12.5 M8.6 0.9 V12.5 M0.6 4.8 H12.6 M0.6 8.6 H12.6"/></svg>
<svg style="left:1229px;top:764px" width="15" height="14" viewBox="0 0 15 14" fill="none" stroke="#6f6f6f" stroke-width="1.2"><rect x="1.3" y="1" width="12.4" height="11.4" rx="1.2"/><rect x="4.4" y="2.8" width="6.2" height="7.8" stroke-width="1"/><path d="M5.6 5 H9.4 M5.6 6.8 H9.4 M5.6 8.6 H9.4" stroke-width="0.8"/></svg>
<svg style="left:1264px;top:764px" width="16" height="14" viewBox="0 0 16 14" fill="none" stroke="#6f6f6f" stroke-width="1.2"><rect x="1.5" y="1" width="12.8" height="11.4" rx="1.2"/><path d="M1.5 7.5 H9.4 V1 M5.5 1 V7.5"/></svg>
<div class="a" style="left:1298.2px;top:769.5px;width:7.8px;height:1.5px;background:#6a6a6a"></div>
<div class="a" style="left:1313px;top:769px;width:100px;height:3.4px;border-radius:2px;background:#a8a8a8"></div>
<div class="a" style="left:1354.5px;top:762.5px;width:16px;height:16px;border-radius:50%;background:#fff;box-shadow:0 0.5px 1.5px rgba(0,0,0,.4)"></div>
<svg style="left:1419px;top:766px" width="10" height="10" viewBox="0 0 10 10"><path d="M5 0.8 V9.2 M0.8 5 H9.2" stroke="#555" stroke-width="1.5"/></svg>
<div class="t" style="left:1445.70px;top:763.00px;font-size:12.40px;line-height:16px;letter-spacing:-0.212px;color:#3c3c3c;">100 %</div>
<svg style="left:0;top:0" width="1504" height="782" viewBox="0 0 1504 782"><path d="M0 777 V782 H9 C4.4 781.6 1 780.2 0 777 Z" fill="#1a1a1a"/><path d="M1504 774 V782 H1496.5 C1500.6 781.2 1503.2 778.6 1504 774 Z" fill="#1a1a1a"/><path d="M0 0 H2.4 A2.4 2.4 0 0 0 0 2.4 Z" fill="#444"/><path d="M1504 0 H1500.5 A3.5 3.5 0 0 1 1504 3.5 Z" fill="#2a2a2a"/></svg>
</div></body></html>
